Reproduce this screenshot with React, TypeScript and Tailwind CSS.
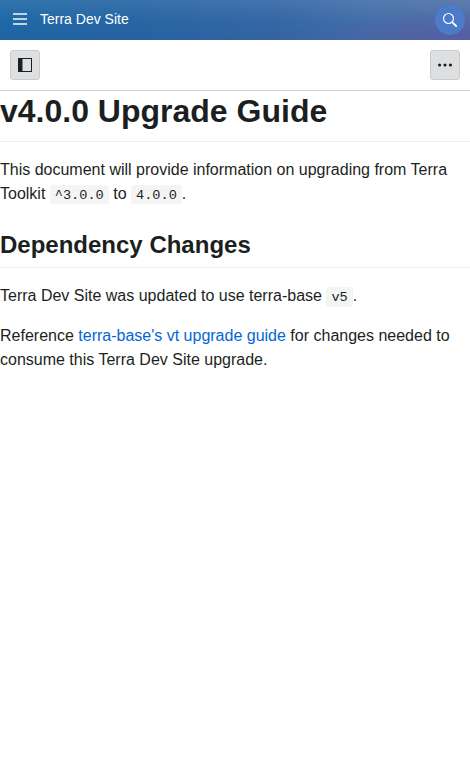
import type { ReactNode } from "react";

function Code({ children }: { children: ReactNode }) {
  return (
    <code className="rounded-[3px] bg-[#1b1f23]/5 px-[5px] pt-[2.72px] pb-[1.8px] font-['Liberation_Mono',monospace] text-[13.6px] leading-none">
      {children}
    </code>
  );
}

function ToolbarButton({ label, children }: { label: string; children: ReactNode }) {
  return (
    <button
      aria-label={label}
      className="flex size-[30px] items-center justify-center rounded-[3px] border border-[#c8cacb] bg-[#dedfe0] text-[#1c1f21]"
    >
      {children}
    </button>
  );
}

function Header() {
  return (
    <header className="flex h-10 items-center bg-[radial-gradient(ellipse_150px_26px_at_100%_85%,#5e55a299,#5e55a200),linear-gradient(to_bottom,#ffffff14,#ffffff00_50%,#2000600d),linear-gradient(to_right,#1f69a6,#2766a4_28%,#3668a6_60%,#4570a9_80%,#5070a8)] pr-[5px] text-white">
      <button aria-label="Menu" className="flex size-10 items-center justify-center">
        <svg width="14" height="14" viewBox="0 0 14 14" fill="#fff" fillOpacity="0.95">
          <path d="M0 .25h14v1.5H0zM0 5.25h14v1.5H0zM0 10.250h14v1.5H0z" />
        </svg>
      </button>
      <span className="flex-1 pb-0.5 text-sm leading-5">Terra Dev Site</span>
      <button aria-label="Search" className="flex size-[30px] items-center justify-center rounded-full bg-[#4b7bc9]">
        <svg width="14" height="14" viewBox="0 0 14 14" fill="none" stroke="#fff">
          <circle cx="5.5" cy="5.5" r="4.950" strokeWidth="1.1" />
          <path d="M9 9l.8.8" strokeWidth="1.2" />
          <path d="M9.700 9.700l3.500 3.500" strokeWidth="1.9" strokeLinecap="round" />
        </svg>
      </button>
    </header>
  );
}

export default function App() {
  return (
    <div className="min-h-screen bg-white font-['Liberation_Sans',Arial,sans-serif] text-[#1c1f21]">
      <Header />
      <div className="flex h-[51px] items-center justify-between border-b border-[#d0d2d3] px-2.5">
        <ToolbarButton label="Toggle side menu">
          <svg width="14" height="14" viewBox="0 0 14 14" shapeRendering="crispEdges">
            <path fill="currentColor" fillRule="evenodd" d="M0 0h14v14H0zM5 1v12h8V1z" />
            <path fill="#838587" d="M4 1h1v12H4z" />
          </svg>
        </ToolbarButton>
        <ToolbarButton label="More">
          <svg width="14" height="14" viewBox="0 0 48 48" fill="currentColor">
            <circle cx="5.4" cy="24" r="5.4" />
            <circle cx="24" cy="24" r="5.4" />
            <circle cx="42.6" cy="24" r="5.4" />
          </svg>
        </ToolbarButton>
      </div>
      <main className="text-base leading-6">
        <h1 className="mb-4 border-b border-[#eaecef] pb-[9.6px] text-[32px] leading-10 font-bold">
          v4.0.0 Upgrade Guide
        </h1>
        <p className="mb-6">
          This document will provide information on upgrading from Terra Toolkit <Code>^3.0.0</Code> to{" "}
          <Code>4.0.0</Code>.
        </p>
        <h2 className="mb-4 border-b border-[#eaecef] pb-[7.2px] text-2xl leading-[30px] font-bold">
          Dependency Changes
        </h2>
        <p className="mb-4">
          Terra Dev Site was updated to use terra-base <Code>v5</Code>.
        </p>
        <p>
          Reference{" "}
          <a href="#upgrade-guide" className="text-[#0366d6]">
            terra-base's vt upgrade guide
          </a>{" "}
          for changes needed to consume this Terra Dev Site upgrade.
        </p>
      </main>
    </div>
  );
}
